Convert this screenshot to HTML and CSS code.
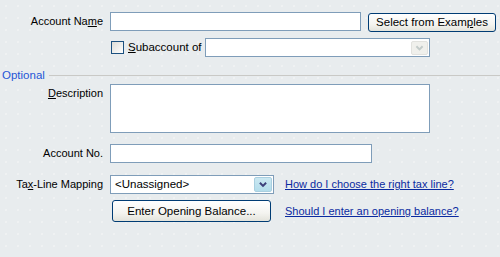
FILE: index.html
```html
<!DOCTYPE html>
<html>
<head>
<meta charset="utf-8">
<link rel="stylesheet" href="styles.css">
</head>
<body>
<div class="form">
  <div class="row r1">
    <label class="lbl">Account Na<u>m</u>e</label>
    <div class="input w-name"></div>
    <button class="btn btn-examples">Select from Exam<u>p</u>les</button>
  </div>
  <div class="row r2">
    <span class="lbl"></span>
    <span class="check"></span>
    <span class="check-text"><u>S</u>ubaccount of</span>
    <div class="input combo w-sub">
      <span class="drop disabled">
        <svg width="17" height="14" viewBox="0 0 17 14"><path d="M5 5 L8.5 8.5 L12 5" fill="none" stroke="#c3cbc9" stroke-width="2.2"/></svg>
      </span>
    </div>
  </div>
  <div class="section">
    <span class="sec-title">Optional</span>
    <span class="sec-line"></span>
  </div>
  <div class="row r3">
    <label class="lbl top"><u>D</u>escription</label>
    <div class="input area"></div>
  </div>
  <div class="row r4">
    <label class="lbl">Account No.</label>
    <div class="input w-no"></div>
  </div>
  <div class="row r5">
    <label class="lbl">Ta<u>x</u>-Line Mapping</label>
    <div class="input combo w-tax">
      <span class="combo-text">&lt;Unassigned&gt;</span>
      <span class="drop active">
        <svg width="18" height="15" viewBox="0 0 18 15"><path d="M5.5 5.5 L9 9 L12.5 5.5" fill="none" stroke="#3c3f7a" stroke-width="2.2"/></svg>
      </span>
    </div>
    <a class="link">How do I choose the right tax line?</a>
  </div>
  <div class="row r6">
    <span class="lbl"></span>
    <button class="btn btn-open">Enter Openin<u>g</u> Balance...</button>
    <a class="link link2">Should I enter an opening balance?</a>
  </div>
</div>
</body>
</html>
```

FILE: styles.css
```css
html, body {
  margin: 0;
  padding: 0;
}
body {
  width: 500px;
  height: 257px;
  overflow: hidden;
  background-color: #e8ecee;
  background-image: radial-gradient(circle, #f3f5f5 0.6px, transparent 0.9px);
  background-size: 12px 12px;
  font-family: "Liberation Sans", Arial, sans-serif;
  font-size: 11px;
  line-height: 13px;
  color: #000;
}
u { text-decoration: underline; text-underline-offset: 1px; }
.form {
  display: flex;
  flex-direction: column;
}
.row {
  display: flex;
  align-items: center;
  flex: none;
}
.lbl {
  width: 103px;
  flex: none;
  text-align: right;
  margin-right: 7px;
  white-space: nowrap;
}
.lbl.top { align-self: flex-start; padding-top: 3px; }
.input {
  box-sizing: border-box;
  height: 19px;
  background: #fff;
  border: 1px solid #7f9db9;
  flex: none;
}
.w-name { width: 251px; }
.w-sub { width: 225px; }
.w-no { width: 262px; }
.w-tax { width: 164px; }
.area { width: 320px; height: 49px; }
.combo {
  display: flex;
  align-items: center;
  justify-content: space-between;
  padding: 1px;
}
.combo-text { padding-left: 3px; font-size: 11.5px; white-space: nowrap; }
.drop {
  margin-left: auto;
  width: 17px;
  height: 14px;
  box-sizing: border-box;
  border-radius: 2px;
  display: flex;
  align-items: center;
  justify-content: center;
}
.drop svg { display: block; }
.drop.disabled {
  background: #f0f0ec;
  border: 1px solid #e2e2de;
}
.drop.active {
  width: 18px;
  height: 15px;
  background: linear-gradient(#cbe8f2, #b3ddeb);
  border: 1px solid #a9cfe0;
}
.btn {
  box-sizing: border-box;
  font-family: inherit;
  font-size: 11.5px;
  line-height: 13px;
  color: #000;
  border: 1px solid #003c74;
  border-radius: 3px;
  background: linear-gradient(#ffffff 0%, #f4f4f0 60%, #e3e3db 100%);
  padding: 0;
  flex: none;
  white-space: nowrap;
}
.btn-examples {
  margin-left: 7px;
  width: 128px;
  height: 19px;
  margin-top: 2px;
}
.btn-open {
  width: 159px;
  height: 22px;
  margin-left: 2px;
}
.r1 { margin-top: 12px; height: 19px; }
.r2 { margin-top: 7px; height: 19px; }
.check {
  width: 13px;
  height: 13px;
  box-sizing: border-box;
  border: 1px solid #1c5180;
  background: linear-gradient(135deg, #dcdcd7, #ffffff);
  margin-left: 1px;
  flex: none;
}
.check-text {
  margin-left: 4px;
  width: 77px;
  flex: none;
  white-space: nowrap;
  font-size: 11.5px;
}
.section {
  display: flex;
  align-items: center;
  margin-top: 11px;
  height: 14px;
  flex: none;
}
.sec-title {
  color: #1f56d6;
  margin-left: 2px;
  font-size: 11.5px;
}
.sec-line {
  flex: 1;
  height: 1px;
  background: #c9c9c6;
  margin-left: 4px;
}
.r3 { margin-top: 2px; height: 49px; }
.r4 { margin-top: 11px; height: 19px; }
.r5 { margin-top: 12px; height: 19px; }
.r6 { margin-top: 6px; height: 22px; }
.link {
  color: #0a2aa0;
  text-decoration: underline;
  margin-left: 11px;
  white-space: nowrap;
  font-size: 11px;
}
.link2 { margin-left: 14px; }
```
